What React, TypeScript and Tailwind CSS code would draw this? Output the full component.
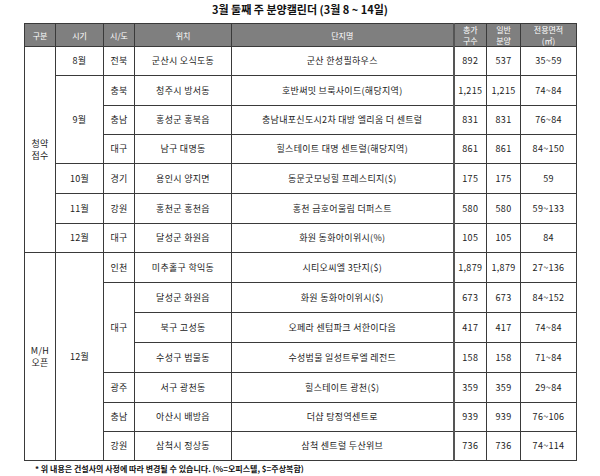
import React from 'react';

type Row = {
  gubun?: { label: string[]; span: number };
  time?: { label: string; span: number };
  sido?: { label: string; span: number };
  loc: string;
  name: string;
  total: string;
  general: string;
  area: string;
  h: string;
};

const rows: Row[] = [
  { gubun: { label: ['청약', '접수'], span: 7 }, time: { label: '8월', span: 1 }, sido: { label: '전북', span: 1 }, loc: '군산시 오식도동', name: '군산 한성필하우스', total: '892', general: '537', area: '35~59', h: 'h-[29px]' },
  { time: { label: '9월', span: 3 }, sido: { label: '충북', span: 1 }, loc: '청주시 방서동', name: '호반써밋 브룩사이드(해당지역)', total: '1,215', general: '1,215', area: '74~84', h: 'h-[30px]' },
  { sido: { label: '충남', span: 1 }, loc: '홍성군 홍북읍', name: '충남내포신도시2차 대방 엘리움 더 센트럴', total: '831', general: '831', area: '76~84', h: 'h-[29px]' },
  { sido: { label: '대구', span: 1 }, loc: '남구 대명동', name: '힐스테이트 대명 센트럴(해당지역)', total: '861', general: '861', area: '84~150', h: 'h-[29px]' },
  { time: { label: '10월', span: 1 }, sido: { label: '경기', span: 1 }, loc: '용인시 양지면', name: '동문굿모닝힐 프레스티지($)', total: '175', general: '175', area: '59', h: 'h-[30px]' },
  { time: { label: '11월', span: 1 }, sido: { label: '강원', span: 1 }, loc: '홍천군 홍천읍', name: '홍천 금호어울림 더퍼스트', total: '580', general: '580', area: '59~133', h: 'h-[30px]' },
  { time: { label: '12월', span: 1 }, sido: { label: '대구', span: 1 }, loc: '달성군 화원읍', name: '화원 동화아이위시(%)', total: '105', general: '105', area: '84', h: 'h-[29px]' },
  { gubun: { label: ['M/H', '오픈'], span: 7 }, time: { label: '12월', span: 7 }, sido: { label: '인천', span: 1 }, loc: '미추홀구 학익동', name: '시티오씨엘 3단지($)', total: '1,879', general: '1,879', area: '27~136', h: 'h-[30px]' },
  { sido: { label: '대구', span: 3 }, loc: '달성군 화원읍', name: '화원 동화아이위시($)', total: '673', general: '673', area: '84~152', h: 'h-[30px]' },
  { loc: '북구 고성동', name: '오페라 센텀파크 서한이다음', total: '417', general: '417', area: '74~84', h: 'h-[30px]' },
  { loc: '수성구 범물동', name: '수성범물 일성트루엘 레전드', total: '158', general: '158', area: '71~84', h: 'h-[30px]' },
  { sido: { label: '광주', span: 1 }, loc: '서구 광천동', name: '힐스테이트 광천($)', total: '359', general: '359', area: '29~84', h: 'h-[30px]' },
  { sido: { label: '충남', span: 1 }, loc: '아산시 배방읍', name: '더샵 탕정역센트로', total: '939', general: '939', area: '76~106', h: 'h-[29px]' },
  { sido: { label: '강원', span: 1 }, loc: '삼척시 정상동', name: '삼척 센트럴 두산위브', total: '736', general: '736', area: '74~114', h: 'h-[29px]' },
];

const cell = 'border border-[#3a3a3a] text-center align-middle p-0 leading-[12px] tracking-[0.3px]';
const head = 'border border-[#3a3a3a] text-center align-middle p-0 font-normal text-white text-[8px] leading-[11px]';

export default function App() {
  return (
    <div className="w-[600px] h-[476px] bg-white text-[#222] font-['Noto_Sans_CJK_KR','Noto_Sans',sans-serif] overflow-hidden">
      <div className="h-[23px] flex items-center justify-center pb-[4px] text-[11px] font-bold text-[#111]">
        3월 둘째 주 분양캘린더 (3월 8 ~ 14일)
      </div>
      <table className="ml-[24px] w-[551px] border-collapse table-fixed text-[9px]">
        <colgroup>
          <col className="w-[31px]" />
          <col className="w-[48px]" />
          <col className="w-[31px]" />
          <col className="w-[97px]" />
          <col className="w-[222px]" />
          <col className="w-[33px]" />
          <col className="w-[34px]" />
          <col className="w-[56px]" />
        </colgroup>
        <thead>
          <tr className="h-[22px] bg-[#7f7f7f]">
            <th className={head}>구분</th>
            <th className={head}>시기</th>
            <th className={head}>시/도</th>
            <th className={head}>위치</th>
            <th className={head}>단지명</th>
            <th className={`${head} border-l-2 border-l-[#555]`}>총가<br />구수</th>
            <th className={head}>일반<br />분양</th>
            <th className={head}>전용면적<br />(㎡)</th>
          </tr>
        </thead>
        <tbody>
          {rows.map((r, i) => (
            <tr key={i} className={r.h}>
              {r.gubun && (
                <td rowSpan={r.gubun.span} className={cell}>
                  {r.gubun.label[0]}
                  <br />
                  {r.gubun.label[1]}
                </td>
              )}
              {r.time && (
                <td rowSpan={r.time.span} className={cell}>
                  {r.time.label}
                </td>
              )}
              {r.sido && (
                <td rowSpan={r.sido.span} className={cell}>
                  {r.sido.label}
                </td>
              )}
              <td className={cell}>{r.loc}</td>
              <td className={cell}>{r.name}</td>
              <td className={`${cell} border-l-2 border-l-[#555]`}>{r.total}</td>
              <td className={cell}>{r.general}</td>
              <td className={cell}>{r.area}</td>
            </tr>
          ))}
        </tbody>
      </table>
      <div className="pl-[35px] pt-[2px] text-[8px] font-bold text-[#111] leading-[12px]">
        * 위 내용은 건설사의 사정에 따라 변경될 수 있습니다. (%=오피스텔, $=주상복합)
      </div>
    </div>
  );
}
